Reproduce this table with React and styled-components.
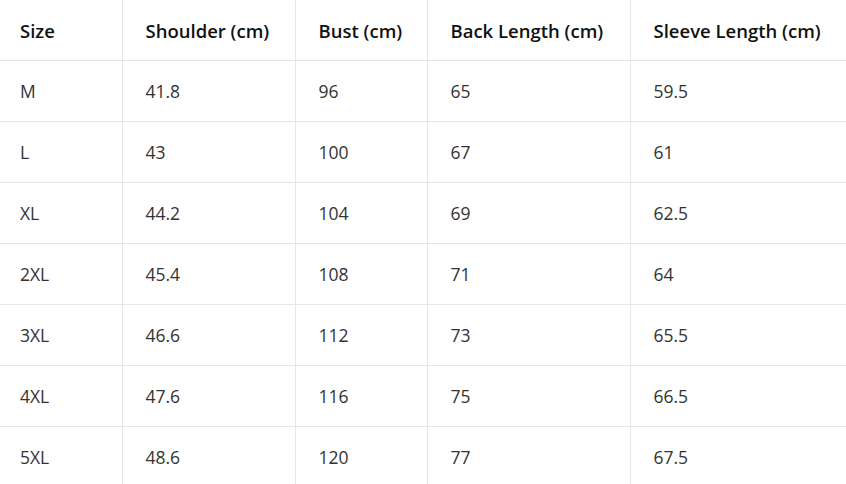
import React from "react";
import styled, { createGlobalStyle } from "styled-components";

const GlobalStyle = createGlobalStyle`
  html, body {
    margin: 0;
    padding: 0;
    background: #ffffff;
  }
  body {
    font-family: "Open Sans", "Noto Sans", Arial, sans-serif;
  }
`;

const columns = [
  { title: "Size", width: 122 },
  { title: "Shoulder (cm)", width: 173 },
  { title: "Bust (cm)", width: 132 },
  { title: "Back Length (cm)", width: 203 },
  { title: "Sleeve Length (cm)", width: 216 },
];

const rows = [
  ["M", "41.8", "96", "65", "59.5"],
  ["L", "43", "100", "67", "61"],
  ["XL", "44.2", "104", "69", "62.5"],
  ["2XL", "45.4", "108", "71", "64"],
  ["3XL", "46.6", "112", "73", "65.5"],
  ["4XL", "47.6", "116", "75", "66.5"],
  ["5XL", "48.6", "120", "77", "67.5"],
];

function App() {
  return (
    <>
      <GlobalStyle />
      <Wrapper>
        <Table>
          <colgroup>
            {columns.map((c) => (
              <col key={c.title} style={{ width: c.width }} />
            ))}
          </colgroup>
          <thead>
            <tr>
              {columns.map((c) => (
                <HeadCell key={c.title}>{c.title}</HeadCell>
              ))}
            </tr>
          </thead>
          <tbody>
            {rows.map((r) => (
              <tr key={r[0]}>
                {r.map((v, i) => (
                  <Cell key={i}>{v}</Cell>
                ))}
              </tr>
            ))}
          </tbody>
        </Table>
      </Wrapper>
    </>
  );
}

const Wrapper = styled.div`
  width: 846px;
  height: 484px;
  overflow: hidden;
  border-radius: 0 0 10px 10px;
  background: #ffffff;
`;

const Table = styled.table`
  width: 846px;
  border-collapse: collapse;
  table-layout: fixed;
`;

const BaseCell = styled.td`
  height: 60px;
  padding: 0 4px 0 23px;
  text-align: left;
  vertical-align: middle;
  font-size: 17.5px;
  border-bottom: 1px solid #e6e6e6;
  border-left: 1px solid #e6e6e6;
  white-space: nowrap;

  &:first-child {
    padding-left: 20px;
    border-left: none;
  }
`;

const HeadCell = styled(BaseCell).attrs({ as: "th" })`
  font-size: 18.5px;
  font-weight: 600;
  color: #111111;
`;

const Cell = styled(BaseCell)`
  font-weight: 400;
  color: #333333;
`;

export default App;
